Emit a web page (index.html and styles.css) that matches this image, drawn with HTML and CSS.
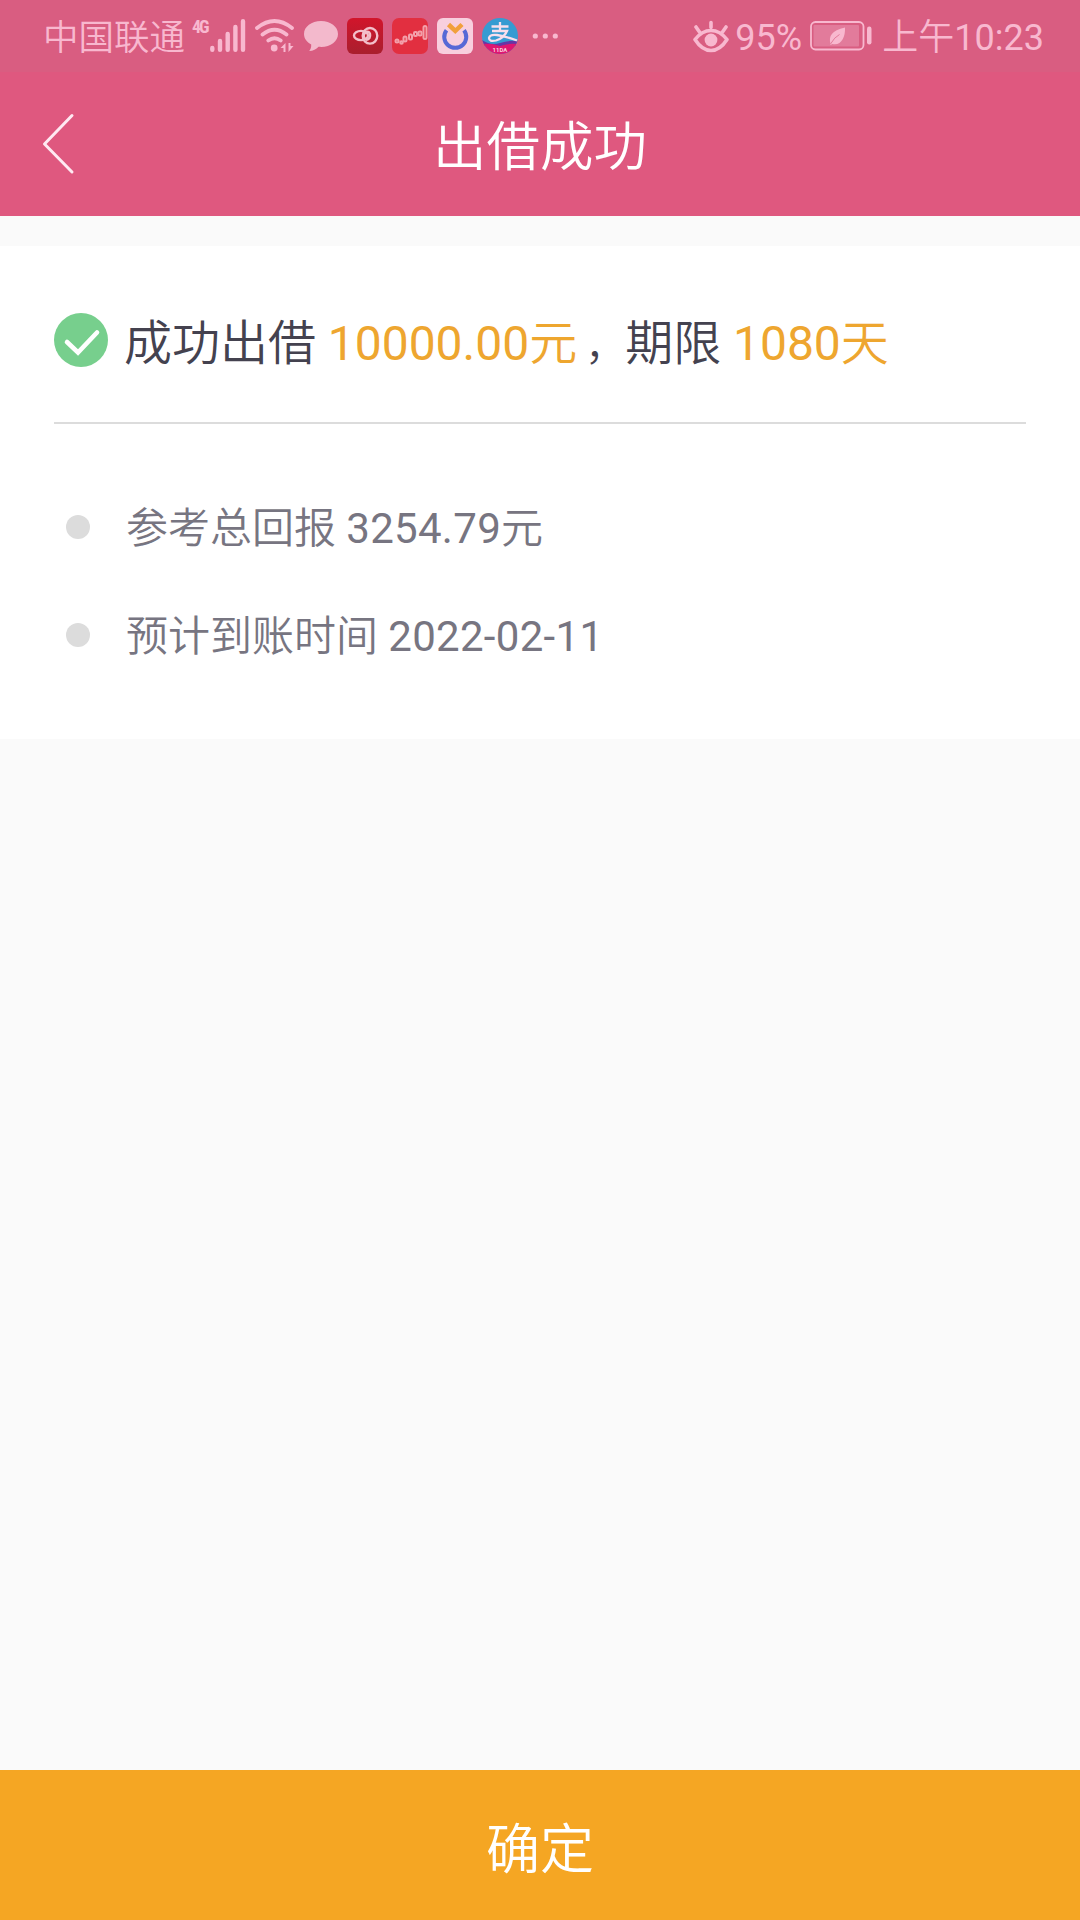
FILE: index.html
```html
<!DOCTYPE html>
<html lang="zh-CN">
<head>
  <meta charset="UTF-8" />
  <meta name="viewport" content="width=device-width, initial-scale=1.0"/>
  <title>出借成功</title>
  <link rel="stylesheet" href="styles.css">
</head>
<body>

  <header class="top">
    <div class="status-bar">
      <div class="status-left">
        <span class="carrier">中国联通</span>
        <span class="network">4G</span>
        <svg class="signal" width="36" height="34" viewBox="0 0 36 34" stroke="currentColor" stroke-width="4.4" stroke-linecap="round">
          <path d="M2.3 29v1.8M10 22v8.8M17.7 15v15.8M25.4 8v22.8M33 2.2v28.6"/>
        </svg>
        <svg class="wifi" width="40" height="34" viewBox="0 0 40 34" fill="none" stroke="currentColor" stroke-width="3.8" stroke-linecap="round">
          <path d="M2 9q17.500-14 35 0M7.500 15.500q12-9.500 24 0M13.300 21.500q6.200-4.500 12.400 0"/>
          <circle cx="19.200" cy="29" r="3.400" fill="currentColor" stroke="none"/>
          <path d="M25.500 29l5-5v9h-2v-4zM33.500 24v9l5-6h-3v-3z" fill="currentColor" stroke="none"/>
        </svg>
        <svg class="bubble" width="34" height="34" viewBox="0 0 34 34">
          <path d="M17 2C7.500 2 0 7.600 0 15c0 4.400 2.800 8.200 7.200 10.500.2 3-.7 5-2 6.600 4-.2 7-1.700 9.300-4.300 10.700 1.200 19.500-4.800 19.500-12.800C34 7.600 26.500 2 17 2z" fill="#f3b9cc"/>
        </svg>
        <svg class="app" width="36" height="36" viewBox="0 0 36 36">
          <defs>
            <linearGradient id="red" x1="0" y1="0" x2="0" y2="1"><stop offset="0" stop-color="#d2152b"/><stop offset="1" stop-color="#a91f2e"/></linearGradient>
          </defs>
          <rect width="36" height="36" rx="6" fill="url(#red)"/>
          <g fill="none" stroke="#f3bfca" stroke-width="2.400">
            <ellipse cx="14" cy="17.500" rx="7" ry="4.600"/>
            <ellipse cx="23" cy="17.800" rx="7.300" ry="7.800"/>
            <path d="M18 21q-3-4 1-7 3-1 4 2 1 5-4 6"/>
          </g>
        </svg>
        <svg class="app" width="36" height="36" viewBox="0 0 36 36">
          <rect width="36" height="36" rx="7" fill="#e22f40"/>
          <g fill="none" stroke="#f3a0aa" stroke-width="2">
            <circle cx="5" cy="23" r="1.500"/>
            <circle cx="9.500" cy="24.500" r="1.300"/>
            <rect x="11.500" y="18.500" width="3" height="5" rx="1.500"/>
            <rect x="17" y="16.500" width="3" height="5" rx="1"/>
            <rect x="22" y="14" width="3" height="4" rx="1"/>
            <rect x="26.500" y="13.500" width="3" height="4" rx="1"/>
            <rect x="31.500" y="8" width="3" height="13" rx="1.500"/>
          </g>
        </svg>
        <svg class="app" width="36" height="36" viewBox="0 0 36 36">
          <rect width="36" height="36" rx="6" fill="#f8cfde"/>
          <path d="M9.500 12.200A11 11 0 1 0 27 12.200" fill="none" stroke="#5769d6" stroke-width="4"/>
          <path d="M11.500 6.500l6.800 6.500 6.700-6.500" fill="none" stroke="#f1a03c" stroke-width="4.500"/>
        </svg>
        <svg class="app" width="36" height="36" viewBox="0 0 36 36">
          <defs>
            <clipPath id="round"><circle cx="18" cy="18" r="18"/></clipPath>
          </defs>
          <g clip-path="url(#round)">
            <rect width="36" height="36" fill="#369bd2"/>
            <path d="M0 22q9 6 18 3t18-2v5H0z" fill="#6736a5"/>
            <path d="M0 26q9-1 18 2 9-3 18-2v10H0z" fill="#df1670"/>
          </g>
          <path d="M9.500 8.500h17M18 4v9M10 13h15q-3 7-11 9.500-7 1.500-7-2.500 1-4 8-3 9 1.500 20 5.500" fill="none" stroke="#f8dfec" stroke-width="2.300"/>
          <text class="app-label" x="18" y="34" text-anchor="middle">11DA</text>
        </svg>
        <svg class="more" width="28" height="36" viewBox="0 0 28 36" fill="currentColor">
          <circle cx="3.300" cy="18" r="2.600"/><circle cx="13.300" cy="18" r="2.600"/><circle cx="23.300" cy="18" r="2.600"/>
        </svg>
      </div>

      <div class="status-right">
        <svg class="eye" width="36" height="34" viewBox="0 0 36 34" fill="none" stroke="currentColor" stroke-width="3.600" stroke-linecap="round" stroke-linejoin="round">
          <path d="M2 20.500Q9 11.500 18 11.500t16 9Q27 31.500 18 31.500T2 20.500zM18 3.500v5M3 8l3.500 5M33 8l-3.500 5"/>
          <circle cx="18" cy="21" r="6.400" fill="currentColor" stroke="none"/>
        </svg>
        <span class="percent num">95%</span>
        <svg class="battery" width="62" height="30" viewBox="0 0 62 30">
          <rect x="1" y="1" width="52.500" height="27.500" rx="4.500" fill="none" stroke="currentColor" stroke-width="1.800"/>
          <rect x="3.500" y="4" width="45.500" height="21.500" rx="1" fill="#e27b9b"/>
          <path d="M20.500 23c-2-8 1-13.500 14.500-16.500.5 10-4 18.500-12.500 16.500l-2.200 1z" fill="currentColor"/>
          <path d="M20.500 23q4-7 9-9.500" fill="none" stroke="#e27b9b"/>
          <rect x="57" y="5.500" width="4.500" height="18" rx="2.200" fill="currentColor"/>
        </svg>
        <span class="clock">上午<span class="num">10:23</span></span>
      </div>
    </div>

    <div class="nav">
      <a class="back" href="#">
        <svg width="34" height="62" viewBox="0 0 34 62" fill="none" stroke="#ffe9f2" stroke-width="3" stroke-linecap="round" stroke-linejoin="round">
          <path d="M30 2.500L2.500 31 30 59"/>
        </svg>
      </a>
      <h1>出借成功</h1>
    </div>
  </header>

  <main class="card">
    <div class="result">
      <svg class="check" width="54" height="54" viewBox="0 0 54 54">
        <circle cx="27" cy="27" r="27" fill="#77cf8d"/>
        <path d="M13 29l11 10.500 19-20" fill="none" stroke="#fff" stroke-width="4.600" stroke-linecap="round" stroke-linejoin="miter"/>
      </svg>
      <p>成功出借 <span class="amount"><span class="num">10000.00</span>元</span><span class="comma">，</span>期限 <span class="amount"><span class="num">1080</span>天</span></p>
    </div>

    <ul class="details">
      <li><span>参考总回报 <span class="num">3254.79</span>元</span></li>
      <li><span>预计到账时间 <span class="num">2022-02-11</span></span></li>
    </ul>
  </main>

  <button class="confirm">确定</button>

</body>
</html>
```
FILE: styles.css
```css
* {
  box-sizing: border-box;
}

body {
  margin: 0;
  font-family: Roboto, 'Noto Sans CJK SC', sans-serif;
  font-weight: 350;
  background-color: #fafafa;
  height: 100vh;
  display: flex;
  flex-direction: column;
}

svg {
  display: block;
  flex: none;
}

.num {
  font-weight: 400;
}

.top {
  height: 216px;
  background-color: #df587f;
}

.status-bar {
  height: 72px;
  padding: 0 36px 0 43px;
  display: flex;
  justify-content: space-between;
  background-color: #d95d81;
  color: #f8b8cf;
  font-size: 36px;
  line-height: 72px;
  white-space: nowrap;
}

.status-left, .status-right {
  display: flex;
  align-items: center;
}

.carrier {
  width: 144px;
  padding-top: 4px;
  font-size: 35.5px;
}

.network {
  width: 18px;
  margin: 0 0 18px 5px;
  font-family: 'Roboto Condensed', Roboto, sans-serif;
  font-size: 18px;
  font-weight: 700;
  line-height: 20px;
  letter-spacing: -2px;
}

.wifi {
  margin-left: 9px;
}

.bubble {
  margin-left: 9px;
}

.app {
  margin-left: 9px;
}

.app-label {
  font-size: 6px;
  font-weight: 700;
  fill: #f8cfde;
}

.more {
  margin-left: 14px;
}

.percent {
  width: 75px;
  padding-top: 4px;
  margin-left: 6px;
}

.clock {
  padding-top: 4px;
  margin-left: 10px;
}

.nav {
  height: 144px;
  display: grid;
  grid-template-columns: 120px 1fr 120px;
  align-items: center;
}

.back {
  padding-left: 42px;
}

.nav h1 {
  margin: 8px 0 0;
  font-size: 53.5px;
  font-weight: 350;
  line-height: 80px;
  text-align: center;
  color: #fff;
}

.card {
  height: 493px;
  margin-top: 30px;
  padding: 0 54px;
  background-color: #fff;
}

.result {
  height: 178px;
  padding-top: 12px;
  display: flex;
  align-items: center;
  border-bottom: 2px solid #dcdcdc;
}

.result p {
  margin: 10px 0 0 16px;
  font-size: 48px;
  line-height: 72px;
  color: #44424f;
  white-space: nowrap;
}

.amount {
  color: #eea62f;
}

.comma {
  padding-left: 8px;
  font-size: 40px;
}

.details {
  margin: 51px 0 0;
  padding: 0 0 0 12px;
  list-style: none;
}

.details li {
  height: 108px;
  display: flex;
  align-items: center;
  font-size: 42px;
  line-height: 60px;
  color: #777581;
}

.details .num {
  letter-spacing: 0.3px;
}

.details li::before {
  content: "";
  width: 24px;
  height: 24px;
  margin: 0 36px 4px 0;
  border-radius: 50%;
  background-color: #dcdcdc;
}

.confirm {
  height: 150px;
  margin-top: auto;
  padding: 0;
  border: none;
  background-color: #f5a623;
  color: #fff;
  font-family: inherit;
  font-size: 54px;
  font-weight: 350;
}
```
